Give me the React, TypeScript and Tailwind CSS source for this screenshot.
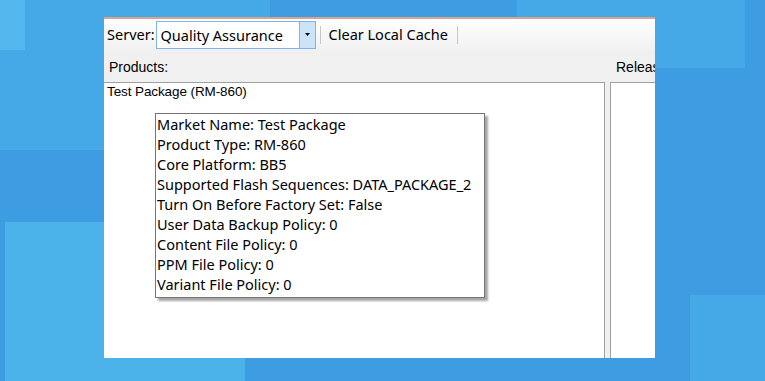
import React from "react";

const details: string[] = [
  "Market Name: Test Package",
  "Product Type: RM-860",
  "Core Platform: BB5",
  "Supported Flash Sequences: DATA_PACKAGE_2",
  "Turn On Before Factory Set: False",
  "User Data Backup Policy: 0",
  "Content File Policy: 0",
  "PPM File Policy: 0",
  "Variant File Policy: 0",
];

const segoe = "font-['Noto_Sans',sans-serif]";
const msSans = "font-['Liberation_Sans',Arial,sans-serif]";

const App: React.FC = () => {
  return (
    <div className="relative w-[765px] h-[381px] overflow-hidden bg-[#3e9de2]">
      {/* desktop tiles */}
      <div className="absolute left-0 top-0 w-[270px] h-[150px] bg-[#45a9e8]" />
      <div className="absolute left-0 top-0 w-[25px] h-[50px] bg-[#53b6ec]" />
      <div className="absolute left-[517px] top-0 w-[228px] h-[68px] bg-[#45a9e8]" />
      <div className="absolute left-[5px] top-[222px] w-[240px] h-[159px] bg-[#4bb3e9]" />
      <div className="absolute left-[690px] top-[295px] w-[75px] h-[86px] bg-[#45a9e8]" />

      {/* app window */}
      <div className="absolute left-[104px] top-[17px] w-[551px] h-[341px] flex flex-col bg-[#f0f0f0] border-t-2 border-[#d9a48d] overflow-hidden">
        <div className={`h-[31px] flex items-center pl-[3px] bg-gradient-to-b from-white to-[#f1f1f1] text-[14.5px] text-black ${segoe}`}>
          <span>Server:</span>
          <div className="ml-[1px] w-[160px] h-[28px] flex border border-[#7eb4ea] bg-white">
            <span className="flex-1 pl-[4px] leading-[26px]">Quality Assurance</span>
            <div className="w-[16px] flex items-center justify-center bg-[#cce4f7] border-l border-[#7eb4ea]">
              <svg width="5" height="3" viewBox="0 0 5 3">
                <path d="M0 0h5L2.5 3z" fill="#000" />
              </svg>
            </div>
          </div>
          <div className="ml-[4px] w-px h-[18px] bg-[#c8c8c8]" />
          <span className="ml-[8px]">Clear Local Cache</span>
          <div className="ml-[9px] w-px h-[18px] bg-[#c8c8c8]" />
        </div>

        <div className={`h-[32px] flex items-center pt-[3px] text-[14px] text-black ${msSans}`}>
          <span className="ml-[5px] w-[507px] shrink-0">Products:</span>
          <span className="whitespace-nowrap">Releases:</span>
        </div>

        <div className="flex-1 flex">
          <div className={`relative w-[501px] bg-white border-t border-r border-[#a0a0a0] text-[13.5px] text-black ${msSans}`}>
            <div className="pl-[3px] leading-[18px] tracking-[-0.1px]">Test Package (RM-860)</div>
            <div className="absolute left-[51px] top-[30px] w-[330px] h-[185px] bg-white border border-[#767676] shadow-[3px_3px_2px_rgba(0,0,0,0.35)]">
              <div className={`pl-[1px] text-[14.5px] leading-[20px] ${segoe}`}>
                {details.map((line) => (
                  <div key={line} className="whitespace-nowrap">{line}</div>
                ))}
              </div>
            </div>
          </div>
          <div className="w-[5px]" />
          <div className="flex-1 bg-white border-t border-l border-[#a0a0a0]" />
        </div>
      </div>
    </div>
  );
};

export default App;
